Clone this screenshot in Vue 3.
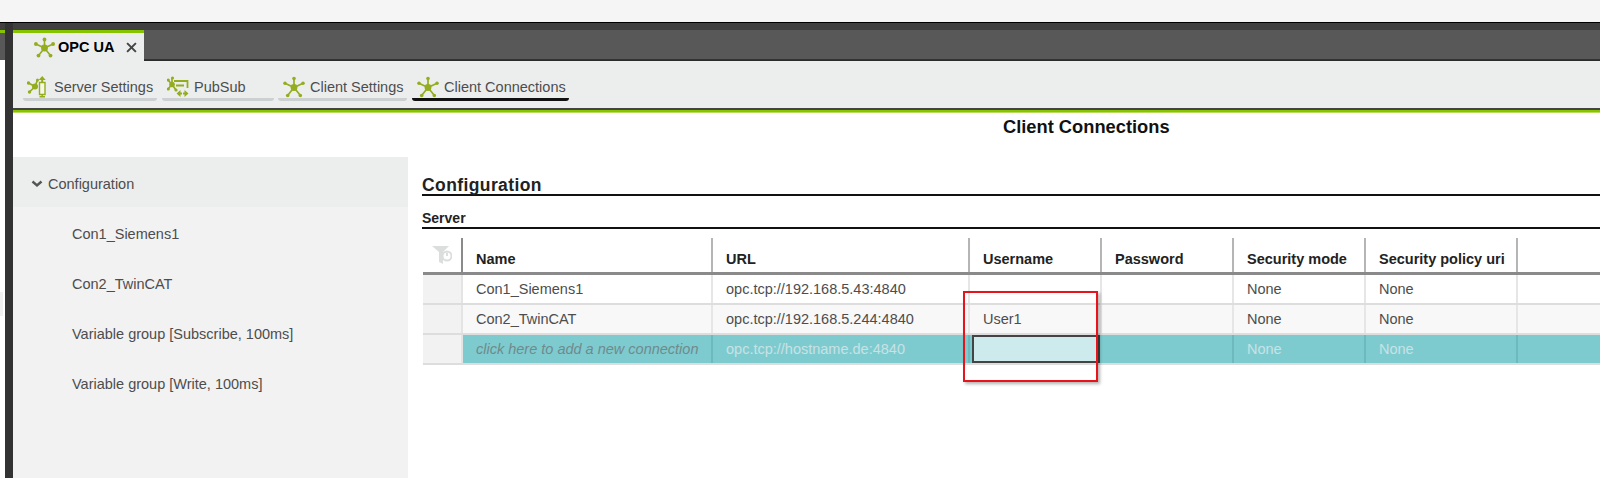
<script setup>
const tools = [
  { label: 'Server Settings', icon: 'server', width: 134 },
  { label: 'PubSub', icon: 'pubsub', width: 112 },
  { label: 'Client Settings', icon: 'node', width: 129 },
  { label: 'Client Connections', icon: 'node', width: 157, active: true }
]
const side = ['Con1_Siemens1', 'Con2_TwinCAT', 'Variable group [Subscribe, 100ms]', 'Variable group [Write, 100ms]']
const headers = ['Name', 'URL', 'Username', 'Password', 'Security mode', 'Security policy uri']
const rows = [
  ['Con1_Siemens1', 'opc.tcp://192.168.5.43:4840', '', '', 'None', 'None'],
  ['Con2_TwinCAT', 'opc.tcp://192.168.5.244:4840', 'User1', '', 'None', 'None']
]
const addRow = ['click here to add a new connection', 'opc.tcp://hostname.de:4840', '', '', 'None', 'None']
</script>

<template>
  <div class="page">
    <div class="top-gap"></div>
    <div class="workspace">
      <div class="stub">
        <div class="stub-tab"></div>
        <div class="stub-body"><span class="stub-patch"></span></div>
      </div>
      <div class="rail"></div>
      <div class="main">
        <div class="tabbar">
          <div class="tab">
            <svg class="tab-icon" viewBox="0 0 22 22"><g class="star"><path d="M11 11.500 11 3M11 11.500 19.500 7.500M11 11.500 17 19M11 11.500 5 19M11 11.500 2.500 7.500"/><circle cx="11" cy="11.500" r="3.600"/><circle cx="11" cy="2.500" r="2"/><circle cx="20" cy="7.300" r="2"/><circle cx="17.300" cy="19.500" r="2"/><circle cx="4.700" cy="19.500" r="2"/><circle cx="2" cy="7.300" r="2"/></g></svg>
            <span class="tab-label">OPC UA</span>
            <svg class="tab-close" viewBox="0 0 10 10"><path d="M1 1 9 9M9 1 1 9"/></svg>
          </div>
        </div>
        <div class="toolbar">
          <div v-for="t in tools" :key="t.label" class="tool" :class="{ active: t.active }" :style="{ width: t.width + 'px' }">
            <svg v-if="t.icon === 'node'" class="tool-icon" viewBox="0 0 22 22"><g class="star"><path d="M11 11.500 11 3M11 11.500 19.500 7.500M11 11.500 17 19M11 11.500 5 19M11 11.500 2.500 7.500"/><circle cx="11" cy="11.500" r="3.400"/><circle cx="11" cy="2.500" r="1.800"/><circle cx="20" cy="7.300" r="1.800"/><circle cx="17.300" cy="19.500" r="1.800"/><circle cx="4.700" cy="19.500" r="1.800"/><circle cx="2" cy="7.300" r="1.800"/></g></svg>
            <svg v-else-if="t.icon === 'server'" class="tool-icon" viewBox="0 0 22 22"><g class="star"><path d="M8 10.500 1.500 7M8 10.500 2.500 16M8 10.500 10.500 4"/><circle cx="8" cy="10.500" r="3"/><circle cx="1.500" cy="7" r="1.700"/><circle cx="2.500" cy="16" r="1.700"/><circle cx="10.500" cy="4" r="1.500"/></g><path class="device" d="M12.500 6.500h5.500v12h-5.500zM15.200 18.500v2M12.500 20.800h5.500"/><path class="arrow" d="M15.200 0 11.700 4h2.500v2h2V4h2.500z"/></svg>
            <svg v-else class="tool-icon" viewBox="0 0 22 22"><g class="star"><path d="M5 8.500 5 2M5 8.500 1 4M5 8.500 1 13M5 8.500 9 14"/><circle cx="5" cy="8.500" r="2.800"/><circle cx="5.500" cy="2" r="1.600"/><circle cx="1.300" cy="4" r="1.600"/><circle cx="1.300" cy="13" r="1.600"/><circle cx="9" cy="14" r="1.600"/></g><path class="lines" d="M7 5h13.500v7M9 9.500h8"/><path class="arrow" d="M9.500 17.500 13.500 14v2.500h1.500v2h-1.500V21zM21.500 17.500 17.500 14v2.500H16v2h1.500V21z"/></svg>
            <span class="tool-label">{{ t.label }}</span>
          </div>
        </div>
        <div class="accent"></div>
        <div class="title-row"><h1>Client Connections</h1></div>
        <div class="content">
          <aside class="sidebar">
            <div class="side-head">
              <svg class="chev" viewBox="0 0 12 8"><path d="M1.500 1.500 6 5.500 10.500 1.500"/></svg>
              <span>Configuration</span>
            </div>
            <div v-for="s in side" :key="s" class="side-item">{{ s }}</div>
          </aside>
          <section class="panel">
            <h2>Configuration</h2>
            <h3>Server</h3>
            <div class="grid head">
              <div class="gutter">
                <svg class="filter" viewBox="0 0 20 18"><path class="funnel" d="M0 0h17l-6 6v12l-4-2V6z"/><circle class="ring" cx="15" cy="10" r="4.500"/><path class="ring-line" d="M15 6.500v3.500"/></svg>
              </div>
              <div v-for="h in headers" :key="h" class="hcell">{{ h }}</div>
              <div class="filler"></div>
            </div>
            <div v-for="(r, i) in rows" :key="i" class="grid row" :class="{ odd: i === 1 }">
              <div class="gutter"></div>
              <div v-for="(c, j) in r" :key="j" class="cell">{{ c }}</div>
              <div class="filler"></div>
            </div>
            <div class="grid row add">
              <div class="gutter"></div>
              <div v-for="(c, j) in addRow" :key="j" class="cell" :class="{ hint: j === 0, editing: j === 2 }">{{ c }}</div>
              <div class="filler"></div>
            </div>
            <div class="callout"></div>
          </section>
        </div>
      </div>
    </div>
  </div>
</template>

<style>
html, body { margin: 0; background: #fff; overflow: hidden; }
</style>

<style scoped>
.page { width: 1600px; height: 478px; overflow: hidden; display: flex; flex-direction: column; font-family: "Liberation Sans", Arial, sans-serif; background: #fff; }
.top-gap { height: 22px; background: #f5f5f5; flex: none; }
.workspace { flex: 1; display: flex; min-height: 0; border-top: 1px solid #000; }
.stub { width: 5px; display: flex; flex-direction: column; background: #404040; padding-top: 7px; box-sizing: border-box; flex: none; }
.stub-tab { height: 3px; background: #86c400; }
.stub-body { margin-top: 27px; flex: 1; background: #fff; padding-top: 232px; box-shadow: 0 -27px 0 #585858; }
.stub-patch { display: block; width: 3px; height: 24px; background: #f0f0f0; }
.rail { width: 8px; background: #333; flex: none; }
.main { flex: 1; min-width: 0; display: flex; flex-direction: column; }

.tabbar { height: 38px; box-sizing: border-box; padding-top: 7px; background: linear-gradient(#404040 7px, #585858 7px); border-bottom: 1px solid #2c2c2c; box-shadow: inset 0 -1px 0 #333; flex: none; position: relative; z-index: 1; }
.tab { width: 131px; height: 31px; box-sizing: border-box; border-top: 3px solid #86c400; background: #eceeed; display: flex; align-items: center; padding-left: 21px; }
.tab-icon { width: 21px; height: 21px; flex: none; margin-top: 1px; }
.tab-label { font-size: 14.500px; font-weight: 700; color: #000; margin-left: 3px; width: 69px; white-space: nowrap; }
.tab-close { width: 11px; height: 11px; fill: none; stroke: #444; stroke-width: 1.800; flex: none; margin-left: -1px; }

.star path { stroke: #93ad1f; stroke-width: 1.700; fill: none; }
.star circle { fill: #93ad1f; }
.device { stroke: #93ad1f; stroke-width: 1.400; fill: #f6f7e6; }
.arrow { fill: #93ad1f; }
.lines { stroke: #93ad1f; stroke-width: 1.800; fill: none; }

.toolbar { height: 47px; box-sizing: border-box; background: #eceeed; display: flex; gap: 5px; padding: 11px 0 0 10px; flex: none; }
.tool { height: 29px; box-sizing: border-box; display: flex; align-items: center; padding: 3px 0 0 5px; border-bottom: 3px solid #cdd0d0; border-radius: 0 0 3px 3px; font-size: 14.500px; color: #4d4d4d; white-space: nowrap; }
.tool.active { border-bottom-color: #111; }
.tool:first-child { padding-left: 4px; }
.tool:nth-child(3) { margin-left: -1px; }
.tool-icon { width: 22px; height: 22px; flex: none; }
.tool-label { margin-left: 5px; }

.accent { height: 5px; box-sizing: border-box; border-top: 2px solid #444; background: #86c400; border-bottom: 1px solid #b9dc5e; flex: none; }
.title-row { height: 44px; box-sizing: border-box; padding: 4px 0 0 990px; flex: none; }
h1 { margin: 0; font-size: 18.300px; line-height: 20px; font-weight: 700; color: #111; white-space: nowrap; }

.content { flex: 1; display: flex; min-height: 0; }
.sidebar { width: 395px; background: #f2f2f2; color: #4d4d4d; font-size: 14.500px; flex: none; }
.side-head { height: 50px; box-sizing: border-box; padding: 4px 0 0 18px; background: #eceeed; display: flex; align-items: center; }
.chev { width: 12px; height: 8px; fill: none; stroke: #555; stroke-width: 2.400; margin-right: 5px; }
.side-item { height: 50px; box-sizing: border-box; display: flex; align-items: center; padding: 4px 0 0 59px; }
.panel { flex: 1; min-width: 0; padding-left: 14px; position: relative; }
h2 { margin: 0; height: 39px; box-sizing: border-box; padding-top: 18px; font-size: 17.500px; line-height: 20px; letter-spacing: .4px; font-weight: 700; color: #222; border-bottom: 2px solid #111; }
h3 { margin: 0; height: 33px; box-sizing: border-box; padding-top: 15px; font-size: 14px; line-height: 15px; font-weight: 700; color: #222; border-bottom: 2px solid #111; }

.grid { display: grid; grid-template-columns: 40px 250px 257px 132px 132px 132px 152px 1fr; margin-left: 1px; font-size: 14.500px; }
.head { height: 46px; box-sizing: border-box; padding-top: 9px; border-bottom: 3px solid #8a8a8a; font-weight: 700; color: #222; }
.hcell { border-right: 2px solid #b5b5b5; padding: 11px 0 0 13px; white-space: nowrap; line-height: 20px; box-sizing: border-box; }
.head .gutter { border-right: 2px solid #8a8a8a; background: transparent; }
.filter { width: 20px; height: 18px; display: block; margin: 8px 0 0 9px; }
.funnel { fill: #dcdede; }
.ring { fill: #fff; stroke: #dcdede; stroke-width: 2; }
.ring-line { stroke: #dcdede; stroke-width: 2; }

.row { height: 30px; box-sizing: border-box; border-bottom: 2px solid #ddd; color: #4d4d4d; }
.row.odd { background: #f8f8f8; }
.gutter { background: #f2f2f2; border-right: 2px solid #e4e4e4; box-sizing: border-box; }
.cell { border-right: 2px solid #e6e6e6; box-sizing: border-box; padding-left: 13px; line-height: 28px; white-space: nowrap; }
.add { background: #7ecbcf; color: #c8e2e5; }
.add .cell { border-right-color: #6db9bd; }
.add .hint { font-style: italic; color: #6f8a8d; }
.add .editing { background: #cdeaec; border: 2px solid #444; margin: 0 2px; }

.callout { position: absolute; left: 555px; top: 134px; width: 135px; height: 91px; box-sizing: border-box; border: 2px solid #e8141c; box-shadow: 2px 2px 3px rgba(0, 0, 0, .3); pointer-events: none; }
</style>
